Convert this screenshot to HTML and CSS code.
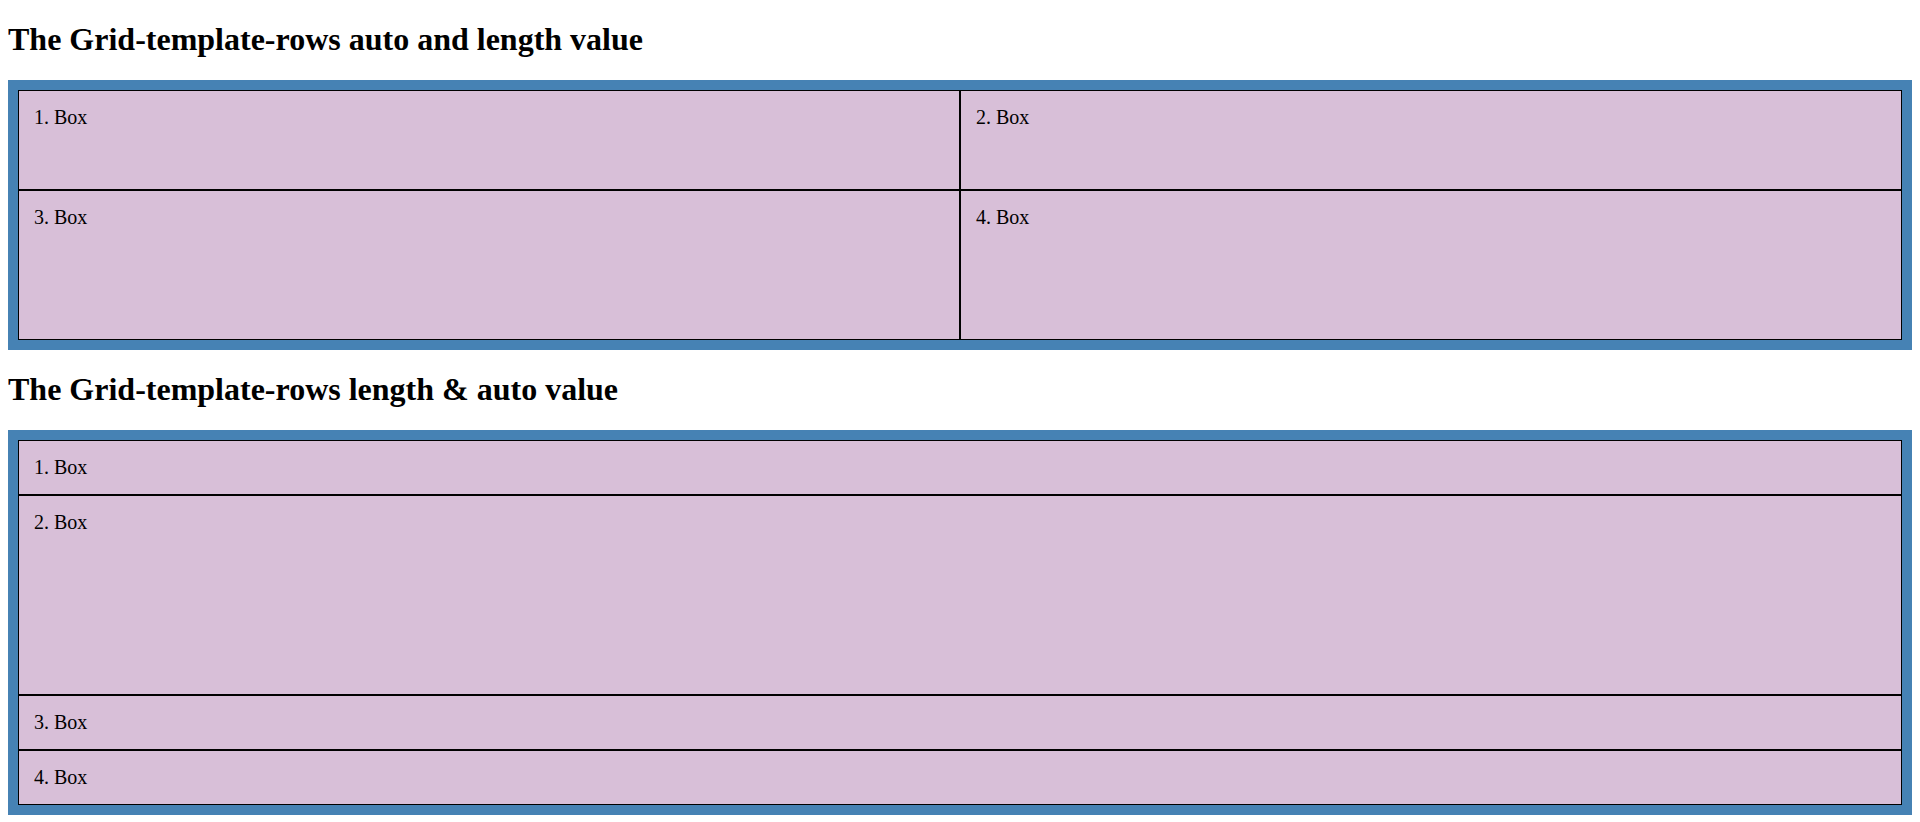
FILE: index.html
```html
<!DOCTYPE html>
<html lang="en">
<head>
  <meta charset="UTF-8">
  <meta name="viewport" content="width=device-width, initial-scale=1.0">
  <title>Grid-template-rows</title>
  <link rel="stylesheet" href="styles.css">
</head>
<body>
  <h1>The Grid-template-rows auto and length value</h1>

  <div class="container rows-auto-length">
    <div class="box">1. Box</div>
    <div class="box">2. Box</div>
    <div class="box">3. Box</div>
    <div class="box">4. Box</div>
  </div>

  <h1>The Grid-template-rows length &amp; auto value</h1>

  <div class="container rows-length-auto">
    <div class="box">1. Box</div>
    <div class="box">2. Box</div>
    <div class="box">3. Box</div>
    <div class="box">4. Box</div>
  </div>
</body>
</html>
```

FILE: styles.css
```css
body {
  font-family: "Liberation Serif", "Times New Roman", serif;
  margin: 0 8px 8px;
}
h1 {
  font-size: 2em;
  margin: 0.67em 0;
}
.container {
  display: grid;
  background-color: steelblue;
  padding: 10px;
}
.rows-auto-length {
  grid-template-columns: 1fr 1fr;
  grid-template-rows: 100px 150px;
}
.rows-length-auto {
  grid-template-columns: 1fr;
  grid-template-rows: auto 200px auto auto;
}
.box {
  background-color: thistle;
  border: 1px solid black;
  padding: 15px;
  font-size: 20px;
}
```
